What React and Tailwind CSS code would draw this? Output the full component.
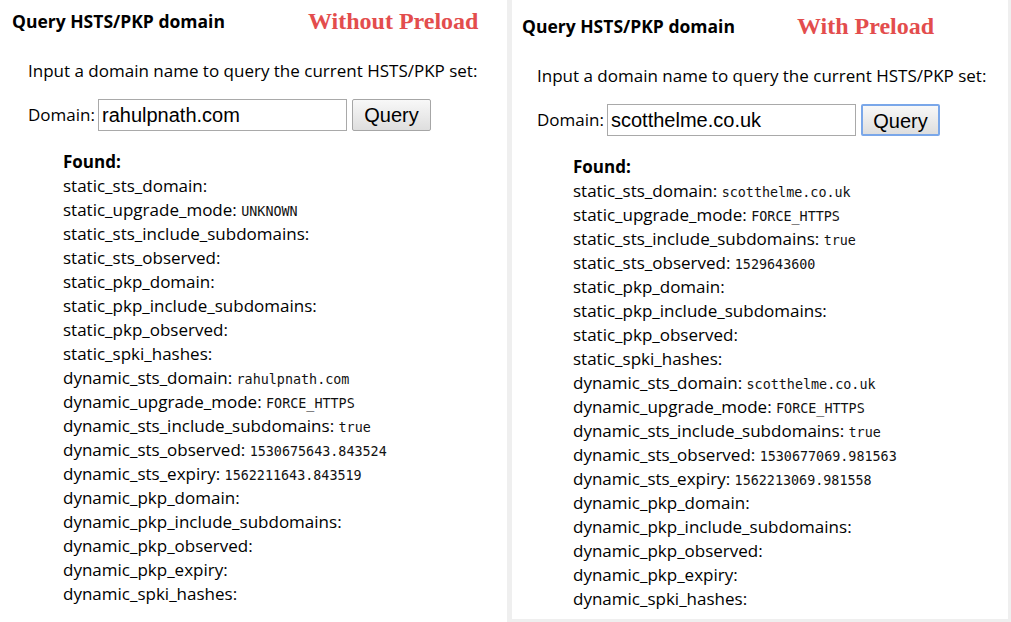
import React from 'react';

const leftRows = [
  ['static_sts_domain', ''],
  ['static_upgrade_mode', 'UNKNOWN'],
  ['static_sts_include_subdomains', ''],
  ['static_sts_observed', ''],
  ['static_pkp_domain', ''],
  ['static_pkp_include_subdomains', ''],
  ['static_pkp_observed', ''],
  ['static_spki_hashes', ''],
  ['dynamic_sts_domain', 'rahulpnath.com'],
  ['dynamic_upgrade_mode', 'FORCE_HTTPS'],
  ['dynamic_sts_include_subdomains', 'true'],
  ['dynamic_sts_observed', '1530675643.843524'],
  ['dynamic_sts_expiry', '1562211643.843519'],
  ['dynamic_pkp_domain', ''],
  ['dynamic_pkp_include_subdomains', ''],
  ['dynamic_pkp_observed', ''],
  ['dynamic_pkp_expiry', ''],
  ['dynamic_spki_hashes', ''],
];

const rightRows = [
  ['static_sts_domain', 'scotthelme.co.uk'],
  ['static_upgrade_mode', 'FORCE_HTTPS'],
  ['static_sts_include_subdomains', 'true'],
  ['static_sts_observed', '1529643600'],
  ['static_pkp_domain', ''],
  ['static_pkp_include_subdomains', ''],
  ['static_pkp_observed', ''],
  ['static_spki_hashes', ''],
  ['dynamic_sts_domain', 'scotthelme.co.uk'],
  ['dynamic_upgrade_mode', 'FORCE_HTTPS'],
  ['dynamic_sts_include_subdomains', 'true'],
  ['dynamic_sts_observed', '1530677069.981563'],
  ['dynamic_sts_expiry', '1562213069.981558'],
  ['dynamic_pkp_domain', ''],
  ['dynamic_pkp_include_subdomains', ''],
  ['dynamic_pkp_observed', ''],
  ['dynamic_pkp_expiry', ''],
  ['dynamic_spki_hashes', ''],
];

const sans = "font-['Open_Sans','Noto_Sans',sans-serif]";

const Panel = ({ label, labelGap, domain, rows, focused, shift }) => (
  <div className={`h-full bg-white ${sans} text-black ${shift ? 'pt-[16px]' : 'pt-[11px]'}`}>
    <div className={`flex items-center h-[20px] ${shift ? 'pl-[10px]' : 'pl-[12px]'}`}>
      <h2 className="text-[17.5px] font-bold w-[296px] shrink-0 whitespace-nowrap">
        Query HSTS/PKP domain
      </h2>
      <span
        className={`font-['Liberation_Serif',serif] font-bold text-[24px] leading-none text-[#e34d4d] ${labelGap}`}
      >
        {label}
      </span>
    </div>
    <div className={shift ? 'pl-[25px]' : 'pl-[28px]'}>
      <p className="text-[17px] leading-[24px] mt-[28px] whitespace-nowrap">
        Input a domain name to query the current HSTS/PKP set:
      </p>
      <div className="flex items-center mt-[16px] h-[32px]">
        <span className="text-[17px] w-[70px] shrink-0">Domain:</span>
        <input
          readOnly
          value={domain}
          className="w-[249px] h-[32px] border border-[#a9a9a9] px-[3px] text-[20px] text-black font-['Liberation_Sans',Arial,sans-serif] outline-none"
        />
        <button
          className={`ml-[5px] w-[79px] h-[32px] rounded-[2px] bg-gradient-to-b from-[#f8f8f8] to-[#dedede] text-[20px] text-black font-['Liberation_Sans',Arial,sans-serif] ${
            focused ? 'border-2 border-[#7aa7e9]' : 'border border-[#a6a6a6]'
          }`}
        >
          Query
        </button>
      </div>
    </div>
    <div className={`mt-[19px] text-[17px] ${shift ? 'pl-[61px]' : 'pl-[63px]'}`}>
      <div className="font-bold h-[24px] leading-[24px]">Found:</div>
      {rows.map(([k, v]) => (
        <div key={k} className="h-[24px] leading-[24px] whitespace-nowrap">
          {k}:{' '}
          {v && (
            <span className="font-['DejaVu_Sans_Mono',monospace] text-[13.4px] leading-none text-[#111]">{v}</span>
          )}
        </div>
      ))}
    </div>
  </div>
);

export default function App() {
  return (
    <div className="w-[1011px] h-[622px] bg-[#efefef] flex items-start overflow-hidden">
      <div className="w-[507px] h-[622px] shrink-0">
        <Panel
          label="Without Preload"
          labelGap="ml-0"
          domain="rahulpnath.com"
          rows={leftRows}
        />
      </div>
      <div className="w-[496px] h-[619px] ml-[5px] shrink-0">
        <Panel
          label="With Preload"
          labelGap="-ml-[21px]"
          domain="scotthelme.co.uk"
          rows={rightRows}
          focused
          shift
        />
      </div>
    </div>
  );
}
